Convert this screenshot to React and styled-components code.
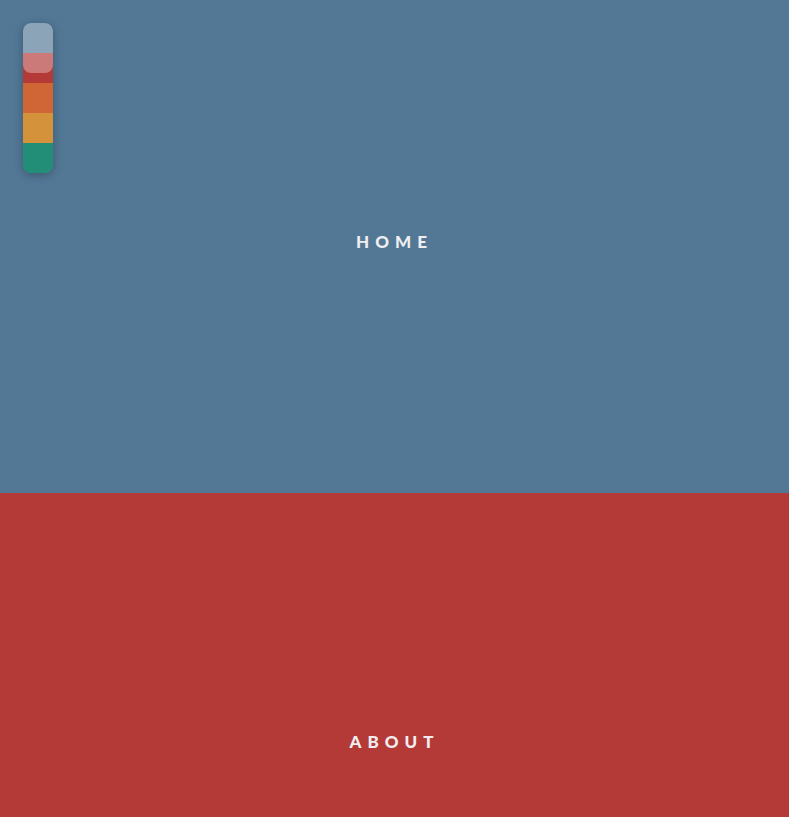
import React, { useState } from 'react';
import styled, { createGlobalStyle } from 'styled-components';

const GlobalStyle = createGlobalStyle`
  html, body {
    margin: 0;
    padding: 0;
    overflow: hidden;
  }
  body {
    font-family: Lato, "Open Sans", sans-serif;
  }
`;

const sections = [
  { id: 'home', label: 'HOME', color: '#527896' },
  { id: 'about', label: 'ABOUT', color: '#b43a38' },
  { id: 'work', label: 'WORK', color: '#d06535' },
  { id: 'blog', label: 'BLOG', color: '#d4923a' },
  { id: 'contact', label: 'CONTACT', color: '#238e78' },
];

const Nav = styled.nav`
  position: fixed;
  top: 23px;
  left: 23px;
  width: 30px;
  display: flex;
  flex-direction: column;
  border-radius: 8px;
  overflow: hidden;
  box-shadow: 0 2px 10px rgba(0, 0, 0, 0.28);
  z-index: 10;
`;

const Dot = styled.a`
  display: block;
  height: 30px;
  background: ${({ color }) => color};
  cursor: pointer;
`;

const Indicator = styled.span`
  position: absolute;
  left: 0;
  top: ${({ offset }) => offset}px;
  width: 30px;
  height: 50px;
  border-radius: 8px;
  background: rgba(255, 255, 255, 0.33);
  pointer-events: none;
`;

const Section = styled.section`
  height: ${({ first }) => (first ? '493px' : '500px')};
  padding-bottom: ${({ first }) => (first ? '11px' : '4px')};
  box-sizing: border-box;
  background: ${({ color }) => color};
  display: flex;
  align-items: center;
  justify-content: center;
`;

const Title = styled.h2`
  margin: 0;
  font-family: Lato, "Open Sans", sans-serif;
  font-weight: 900;
  font-size: 17px;
  letter-spacing: 6px;
  color: #f1eef1;
`;

const App = () => {
  const [offset] = useState(0);

  return (
    <>
      <GlobalStyle />
      <Nav>
        {sections.map((s) => (
          <Dot key={s.id} color={s.color} href={`#${s.id}`} aria-label={s.label} />
        ))}
        <Indicator offset={offset} />
      </Nav>
      <main>
        {sections.map((s, i) => (
          <Section key={s.id} id={s.id} color={s.color} first={i === 0}>
            <Title>{s.label}</Title>
          </Section>
        ))}
      </main>
    </>
  );
};

export default App;
